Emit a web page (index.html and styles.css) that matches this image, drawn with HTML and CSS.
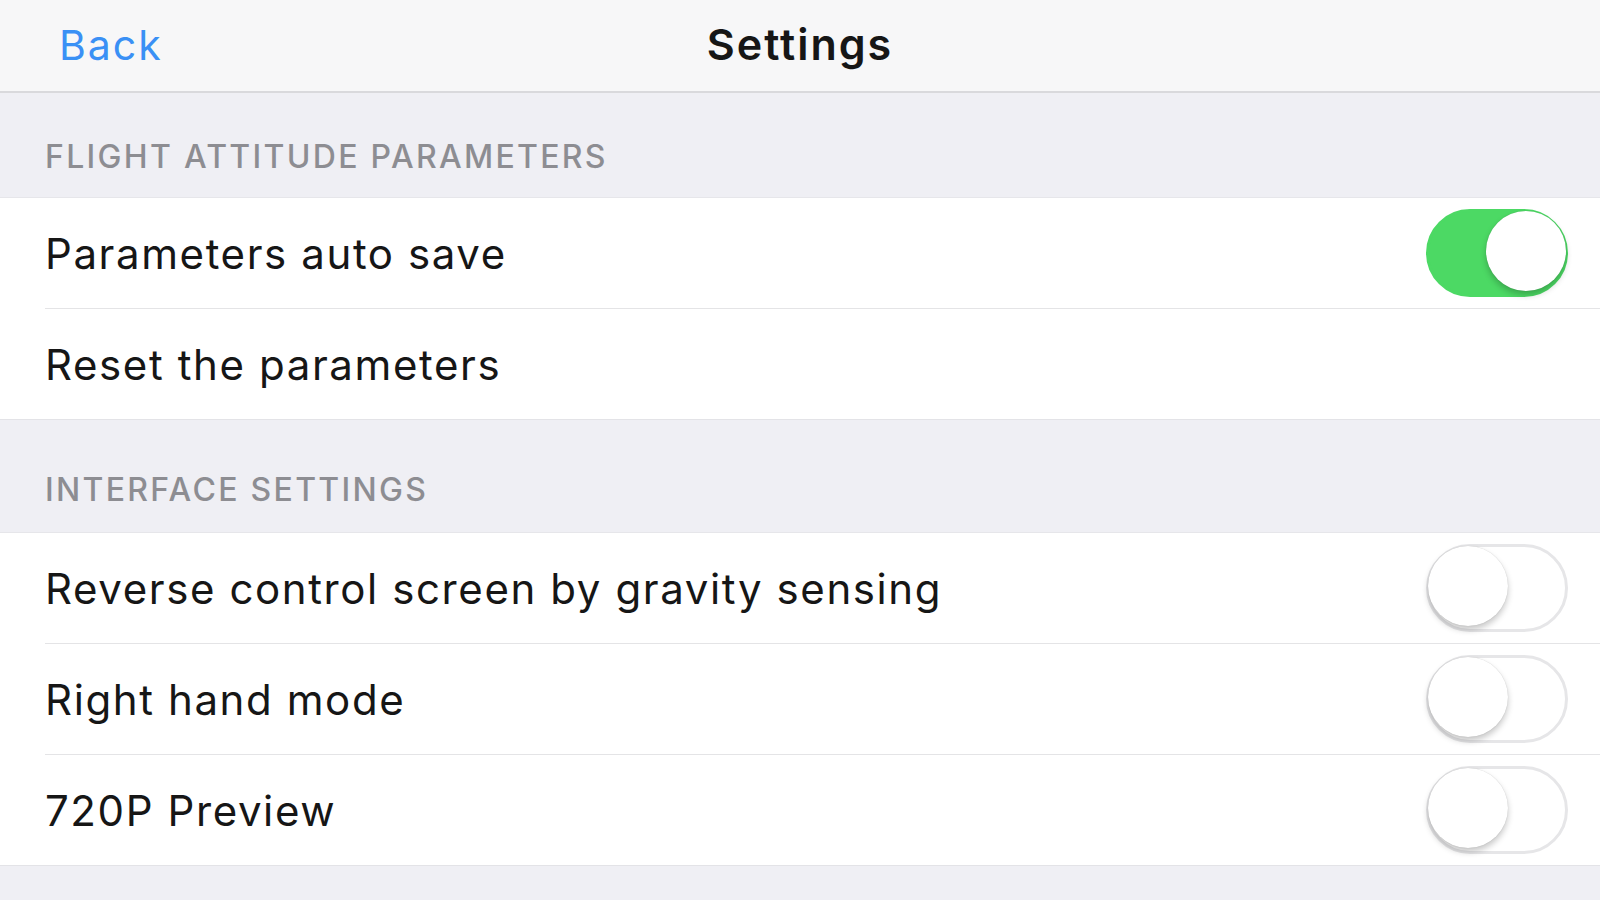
FILE: index.html
```html
<!DOCTYPE html>
<html lang="en">
<head>
    <meta charset="UTF-8">
    <meta name="viewport" content="width=device-width, initial-scale=1.0">
    <title>Settings</title>
    <link rel="stylesheet" href="styles.css">
</head>
<body>
    <div class="navbar">
        <a class="back">Back</a>
        <div class="title">Settings</div>
    </div>

    <div class="section-header first">FLIGHT ATTITUDE PARAMETERS</div>
    <div class="group">
        <div class="row">
            <span class="label">Parameters auto save</span>
            <div class="switch on"><div class="knob"></div></div>
        </div>
        <div class="row">
            <span class="label">Reset the parameters</span>
        </div>
    </div>

    <div class="section-header second">INTERFACE SETTINGS</div>
    <div class="group">
        <div class="row">
            <span class="label">Reverse control screen by gravity sensing</span>
            <div class="switch"><div class="knob"></div></div>
        </div>
        <div class="row">
            <span class="label">Right hand mode</span>
            <div class="switch"><div class="knob"></div></div>
        </div>
        <div class="row">
            <span class="label">720P Preview</span>
            <div class="switch"><div class="knob"></div></div>
        </div>
    </div>
</body>
</html>
```

FILE: styles.css
```css
body {
    margin: 0;
    font-family: 'Inter', 'Liberation Sans', sans-serif;
    background-color: #efeff4;
    color: #161616;
}
.navbar {
    height: 91px;
    background-color: #f7f7f8;
    border-bottom: 2px solid #d9d9dc;
    display: flex;
    align-items: center;
    justify-content: center;
    position: relative;
}
.back {
    position: absolute;
    left: 59px;
    top: 20px;
    font-size: 41px;
    letter-spacing: 2px;
    color: #3a90f5;
}
.title {
    font-size: 43px;
    font-weight: 600;
    letter-spacing: 2px;
    margin-top: -3px;
}
.section-header {
    padding: 0 45px;
    font-size: 32px;
    font-weight: 500;
    letter-spacing: 2.3px;
    color: #8d8d92;
    display: flex;
    align-items: flex-end;
    box-sizing: border-box;
}
.section-header.first {
    height: 104px;
    padding-bottom: 21px;
}
.section-header.second {
    height: 112px;
    padding-bottom: 23px;
}
.group {
    background-color: #fff;
    border-top: 1px solid #e6e6ea;
    border-bottom: 1px solid #e3e3e7;
}
.row {
    height: 110px;
    margin-left: 45px;
    padding-right: 32px;
    display: flex;
    align-items: center;
    justify-content: space-between;
    border-bottom: 1px solid #e4e4e6;
}
.row:last-child {
    border-bottom: none;
}
.label {
    font-size: 42px;
    letter-spacing: 1.6px;
}
.switch {
    width: 142px;
    height: 88px;
    border-radius: 44px;
    box-sizing: border-box;
    border: 3px solid #e6e6e8;
    background-color: #fff;
    position: relative;
}
.switch .knob {
    position: absolute;
    top: -1px;
    left: -1px;
    width: 80px;
    height: 80px;
    border-radius: 50%;
    background-color: #fff;
    box-shadow: 0 4px 6px rgba(0, 0, 0, 0.22), 0 0 1px rgba(0, 0, 0, 0.2);
}
.switch.on {
    background-color: #4cd964;
    border-color: #4cd964;
}
.switch.on .knob {
    left: auto;
    right: -1px;
}
```
